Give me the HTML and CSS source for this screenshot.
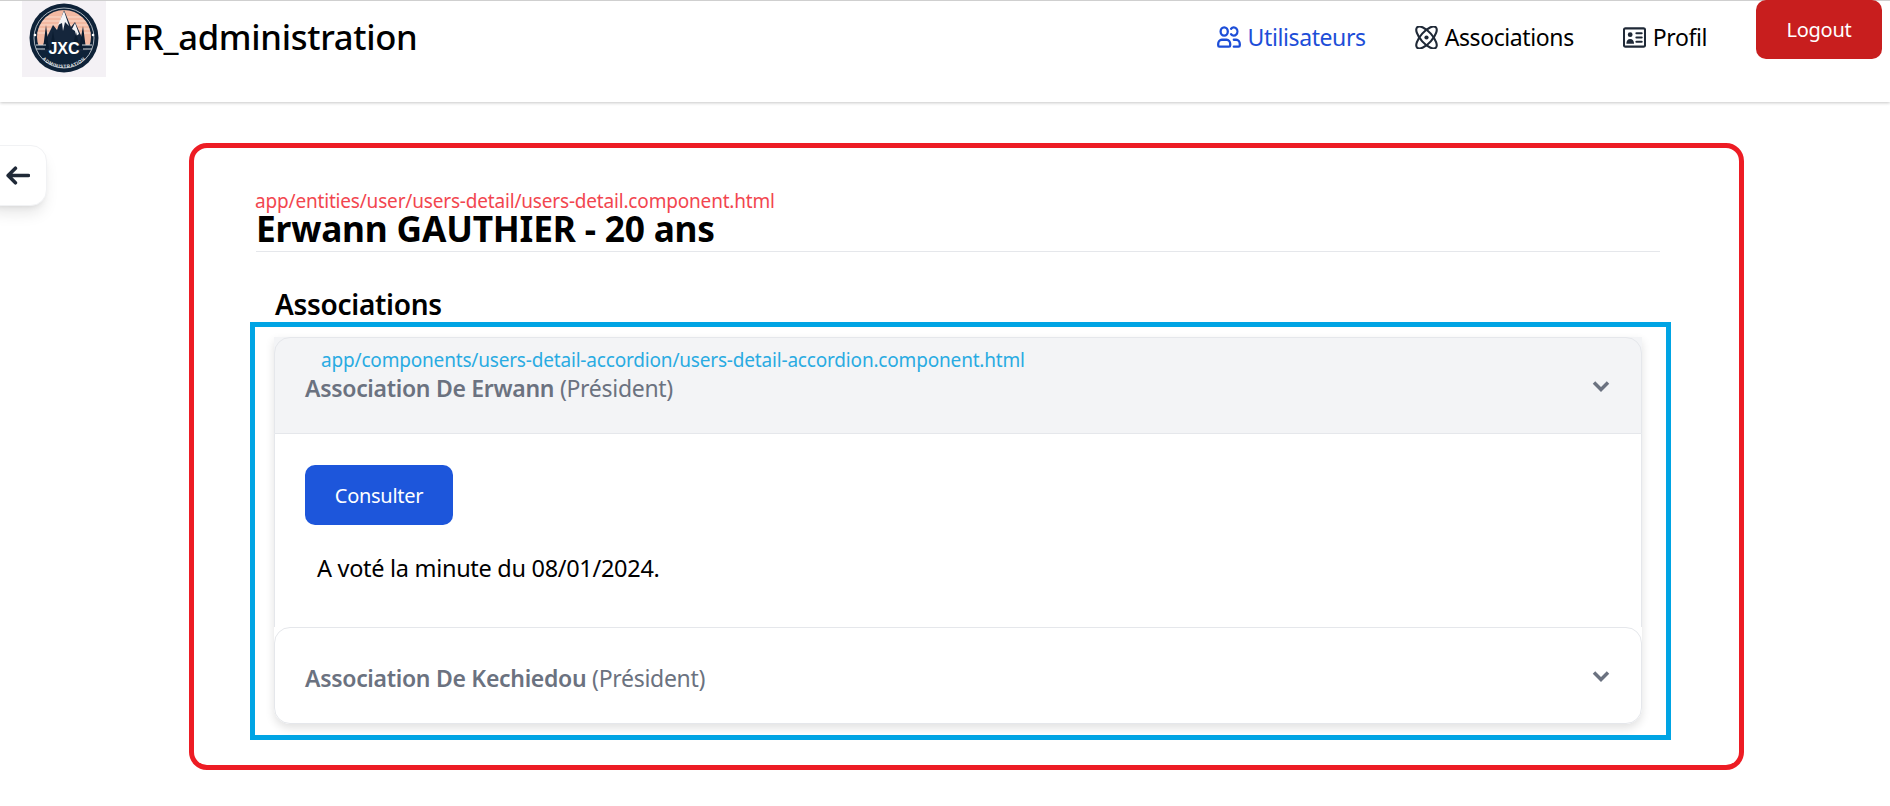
FILE: index.html
```html
<!DOCTYPE html>
<html lang="fr">
<head>
<meta charset="utf-8">
<title>FR_administration</title>
<link rel="stylesheet" href="styles.css">
</head>
<body>
<header class="topbar">
  <div class="brand">
    <svg class="logo" viewBox="0 0 84 76" aria-label="Logo JXC">
      <defs>
        <clipPath id="sky"><circle cx="42" cy="36" r="27"/></clipPath>
        <path id="arc" d="M12 42a30.500 30.500 0 0 0 60 0"/>
      </defs>
      <rect width="84" height="76" fill="#f4f1f5"/>
      <circle cx="42" cy="37" r="34.500" fill="#0e2238"/>
      <circle cx="42" cy="37" r="30" fill="none" stroke="#d8dde2" stroke-width=".8"/>
      <g clip-path="url(#sky)">
        <rect x="14" y="9" width="56" height="35" fill="#f3b9a2"/>
        <path d="M14 16h56M14 20h56M14 24h56M14 28h56M14 32h56" stroke="#fbdccd" stroke-width="1"/>
        <path d="M18 50 31 24l4 5 7-20 7 17 4-5 13 29z" fill="#15263c"/>
        <path d="M42 10l-6 14 4-2 1 8 2-9 4 4zM53 22l-3 6 3 2 1 5 3-2z" fill="#f4f4f6"/>
        <path d="M21 48l3-24 3 24zM28 48l3-18 3 18zM50 48l4-17 4 17zM57 48l4-23 3 23z" fill="#0b1c30"/>
      </g>
      <path d="M14 44h10M60 44h10M14 48h9M61 48h9" stroke="#cfd5da" stroke-width="1.200"/>
      <text class="logo-jxc" x="42" y="53" text-anchor="middle">JXC</text>
      <text class="logo-arc"><textPath href="#arc" startOffset="50%" text-anchor="middle">ADMINISTRATION</textPath></text>
      <circle cx="13" cy="34" r="1.300" fill="#fff"/>
      <circle cx="71" cy="34" r="1.300" fill="#fff"/>
    </svg>
    <span class="brand-name">FR_administration</span>
  </div>
  <nav class="nav">
    <a class="nav-link is-active">
      <svg class="nav-icon icon-users" viewBox="2 4 20 16" preserveAspectRatio="none"><path d="M16 19h4a1 1 0 0 0 1-1v-1a3 3 0 0 0-3-3h-2m-2.236-4a3 3 0 1 0 0-4M3 18v-1a3 3 0 0 1 3-3h4a3 3 0 0 1 3 3v1a1 1 0 0 1-1 1H4a1 1 0 0 1-1-1Zm8-10a3 3 0 1 1-6 0 3 3 0 0 1 6 0Z"/></svg>
      Utilisateurs
    </a>
    <a class="nav-link">
      <svg class="nav-icon" viewBox="0 0 24 24"><ellipse cx="12" cy="12" rx="6" ry="14.500" transform="rotate(-42 12 12)"/><ellipse cx="12" cy="12" rx="6" ry="14.500" transform="rotate(42 12 12)"/><circle class="dot" cx="12" cy="12" r="2.200"/></svg>
      Associations
    </a>
    <a class="nav-link">
      <svg class="nav-icon icon-card" viewBox="0 0 24 21"><rect x="1" y="1" width="22" height="19" rx="1.500"/><circle class="dot" cx="7.500" cy="7.500" r="2.500"/><path class="fill" d="M3.500 17c0-3.500 1.500-5 4-5s4 1.500 4 5z"/><path d="M14 6h5.500M14 10.500h5.500M14 15h5.500"/></svg>
      Profil
    </a>
    <button class="logout" type="button">Logout</button>
  </nav>
</header>

<main class="page">
  <button class="back" type="button" aria-label="Retour">
    <svg viewBox="0 0 24 24" class="back-icon"><path d="M22.500 12H3M10 5l-7 7 7 7"/></svg>
  </button>
  <section class="detail">
    <div class="path path-red">app/entities/user/users-detail/users-detail.component.html</div>
    <h1 class="person">Erwann GAUTHIER - 20 ans</h1>
    <h2 class="section-title">Associations</h2>
    <div class="accordion-frame">
      <div class="accordion">
        <div class="acc-head-bg">
          <div class="acc-head is-open">
            <div class="acc-title">
              <div class="path path-blue">app/components/users-detail-accordion/users-detail-accordion.component.html</div>
              <div class="acc-name"><strong>Association De Erwann</strong> (Président)</div>
            </div>
            <svg class="chevron" viewBox="0 0 18 12"><path d="M2 2.500l7 7 7-7"/></svg>
          </div>
        </div>
        <div class="acc-body">
          <button class="consult" type="button">Consulter</button>
          <p class="vote">A voté la minute du 08/01/2024.</p>
        </div>
        <div class="acc-head acc-head-closed">
          <div class="acc-name"><strong>Association De Kechiedou</strong> (Président)</div>
          <svg class="chevron" viewBox="0 0 18 12"><path d="M2 2.500l7 7 7-7"/></svg>
        </div>
      </div>
    </div>
  </section>
</main>
</body>
</html>
```
FILE: styles.css
```css
* { box-sizing: border-box; }
html, body { margin: 0; padding: 0; }
body {
  width: 1890px;
  height: 806px;
  overflow: hidden;
  background: #fff;
  color: #000;
  font-family: "Noto Sans", "Open Sans", sans-serif;
}
.topbar {
  display: flex;
  justify-content: space-between;
  align-items: flex-start;
  height: 102px;
  border-top: 1px solid #cfcfcf;
  background: #fff;
  box-shadow: 0 1px 3px rgba(0, 0, 0, .22);
  padding-left: 22px;
  padding-right: 8px;
}
.brand { display: flex; align-items: flex-start; gap: 18px; }
.logo { width: 84px; height: 76px; display: block; }
.logo-jxc { font: 800 16px "Liberation Sans", sans-serif; fill: #fff; }
.logo-arc { font: 700 4.600px "Liberation Sans", sans-serif; fill: #e9edf0; letter-spacing: .6px; }
.brand-name {
  font-size: 34.600px;
  line-height: 72px;
  font-weight: 500;
  letter-spacing: -.3px;
}
.nav { display: flex; align-items: flex-start; }
.nav-link {
  display: flex;
  align-items: center;
  gap: 7px;
  height: 72px;
  margin-right: 49px;
  font-size: 23px;
  letter-spacing: -.4px;
  color: #000;
}
.nav-link.is-active { color: #1d4ed8; }
.nav-icon {
  width: 23px;
  height: 23px;
  fill: none;
  stroke: #1f2937;
  stroke-width: 2.200;
  stroke-linecap: round;
  stroke-linejoin: round;
}
.icon-users { width: 24px; height: 22px; }
.icon-users path { vector-effect: non-scaling-stroke; stroke-width: 2.300; }
.icon-card { height: 21px; }
.is-active .nav-icon { stroke: #1d4ed8; }
.nav-icon .dot, .nav-icon .fill { fill: #1f2937; stroke: none; }
.logout {
  width: 126px;
  height: 59px;
  margin-top: -1px;
  padding: 0;
  border: 0;
  border-radius: 10px;
  background: #c81e1e;
  color: #fff;
  font: 400 20px "Noto Sans", sans-serif;
  letter-spacing: -.3px;
}
.page { position: relative; padding: 41px 0 0 189px; }
.back {
  position: absolute;
  left: -16px;
  top: 43px;
  width: 63px;
  height: 61px;
  padding: 0 0 0 16px;
  display: flex;
  align-items: center;
  border: 1px solid #f1f2f4;
  border-radius: 16px;
  background: #fff;
  box-shadow: 0 10px 15px -3px rgba(0, 0, 0, .1), 0 4px 6px -4px rgba(0, 0, 0, .1);
}
.back-icon {
  width: 25px;
  height: 25px;
  margin-left: 4px;
  fill: none;
  stroke: #1f2937;
  stroke-width: 3.400;
  stroke-linecap: round;
  stroke-linejoin: round;
}
.detail {
  width: 1555px;
  height: 627px;
  padding: 40px 73px 0 61px;
  border: 5px solid #ed1c24;
  border-radius: 18px;
}
.path { font-size: 19px; line-height: 26px; letter-spacing: -.18px; }
.path-red { color: #f2464f; }
.path-blue { color: #29abe2; margin-left: 16px; }
.person {
  margin: 0 6px 0 1px;
  height: 38px;
  line-height: 29px;
  font-size: 35.300px;
  font-weight: 700;
  letter-spacing: -.2px;
  border-bottom: 1px solid #e5e7eb;
}
.section-title {
  margin: 34px 0 0 20px;
  height: 36px;
  font-size: 28px;
  line-height: 37px;
  font-weight: 600;
  letter-spacing: -.3px;
}
.accordion-frame {
  width: 1421px;
  height: 418px;
  margin-left: -5px;
  padding: 10px 24px 0 19px;
  border: 5px solid #00a4e4;
}
.accordion {
  background: #fff;
  box-shadow: 0 4px 10px rgba(0, 0, 0, .12);
  border-radius: 0 0 16px 16px;
}
.acc-head-bg { background: #f3f4f6; }
.acc-head {
  display: flex;
  align-items: center;
  justify-content: space-between;
  padding: 0 31px 0 30px;
  border: 1px solid #e5e7eb;
}
.acc-head.is-open { height: 97px; border-radius: 16px 16px 0 0; }
.acc-title { align-self: flex-start; padding-top: 9px; }
.acc-name {
  font-size: 23px;
  line-height: 30px;
  color: #6b7280;
  letter-spacing: -.3px;
}
.acc-name strong { font-weight: 600; }
.chevron {
  flex: none;
  width: 18px;
  height: 12px;
  fill: none;
  stroke: #6b7280;
  stroke-width: 3.500;
}
.acc-body {
  height: 193px;
  padding: 31px 30px 0;
  border-left: 1px solid #e5e7eb;
  border-right: 1px solid #e5e7eb;
}
.consult {
  display: block;
  width: 148px;
  height: 60px;
  padding: 0;
  border: 0;
  border-radius: 10px;
  background: #1d56db;
  color: #fff;
  font: 400 20px "Noto Sans", sans-serif;
  letter-spacing: -.3px;
}
.vote {
  margin: 27px 0 0 12px;
  font-size: 23.500px;
  line-height: 32px;
  letter-spacing: -.3px;
}
.acc-head-closed {
  height: 97px;
  border-radius: 16px;
}
.acc-head-closed .acc-name { padding-top: 5px; }
```
